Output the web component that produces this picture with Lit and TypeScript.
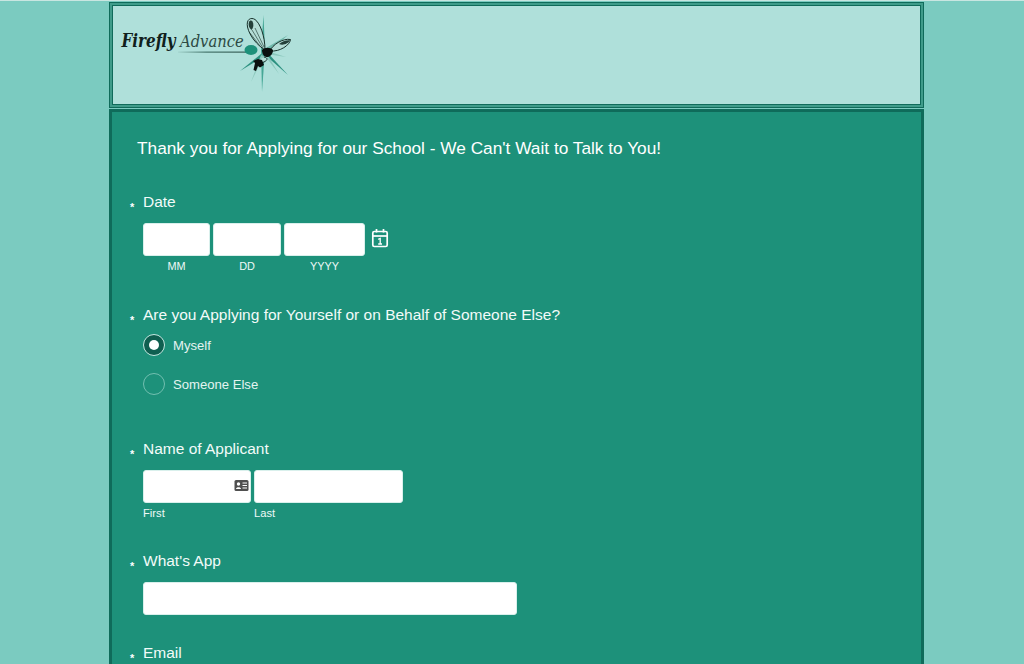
import { LitElement, html, css } from "lit";
import { customElement } from "lit/decorators.js";

@customElement("app-root")
export class AppRoot extends LitElement {
  static styles = css`
    :host {
      display: block;
      height: 664px;
      overflow: hidden;
      background: #7bcbc0;
      font-family: "Liberation Sans", Arial, sans-serif;
      color: #fff;
    }
    * { box-sizing: border-box; }
    .topline { height: 1px; background: #c9e6e1; }
    .wrap { width: 815px; margin-left: 109px; padding-top: 1px; }
    .frame { border: 1px solid #0f6b5a; background: #3f9c8a; padding: 2px; }
    .header {
      height: 100px;
      background: #afe0da;
      border: 1px solid #0f6b5a;
      padding: 6px 0 0 5px;
    }
    .logo { display: block; width: 180px; height: 85px; }
    .form-frame {
      margin-top: 1px;
      border: 1px solid #0f6b5a;
      border-top-width: 3px;
      border-left-width: 3px;
      border-right-width: 3px;
      height: 700px;
      background: #1d917a;
      padding: 25px 0 0 16px;
    }
    .title {
      margin: 0 0 33px 9px;
      font-size: 17.27px;
      font-weight: 400;
      line-height: 22px;
    }
    .field { display: grid; grid-template-columns: 15px 1fr; }
    .star { font-size: 11px; font-weight: 700; line-height: 20px; padding: 5px 0 0 2px; }
    .label { font-size: 15.5px; line-height: 20px; margin-bottom: 11px; color: #f2fbf9; }
    .f-date { height: 113px; }
    .f-choice { height: 134px; }
    .f-name { height: 112px; }
    .f-app { height: 92px; }
    .inputs { display: flex; gap: 3px; align-items: flex-start; }
    .part { display: flex; flex-direction: column; }
    .box {
      height: 33px;
      background: #fff;
      border: 1px solid #d9f0ec;
      border-radius: 3px;
      position: relative;
    }
    .sub { font-size: 11.2px; line-height: 12px; margin-top: 4px; color: #eef9f7; }
    .sub.c { font-size: 10.9px; text-align: center; }
    .mm { width: 67px; }
    .dd { width: 68px; }
    .yy { width: 81px; }
    .cal { width: 18px; height: 20px; margin: 5px 0 0 3px; }
    .first { width: 108px; }
    .last { width: 149px; }
    .id {
      position: absolute;
      right: 1px;
      top: 8px;
      width: 15px;
      height: 13px;
    }
    .wide { width: 374px; }
    .label.tight { margin-bottom: 9px; }
    .radios { display: flex; flex-direction: column; gap: 17px; }
    .radio { display: flex; align-items: center; gap: 8px; font-size: 13.1px; color: #e4f4f1; }
    .dot {
      width: 22px;
      height: 22px;
      border-radius: 50%;
      border: 1px solid #72bfb0;
      display: flex;
      align-items: center;
      justify-content: center;
    }
    .dot.on { background: #0f5f50; border: 1px solid #c5e8e1; }
    .dot.on::after {
      content: "";
      width: 10px;
      height: 10px;
      border-radius: 50%;
      background: #fff;
    }
    .brand-a { font-family: "DejaVu Serif", serif; font-style: italic; font-weight: 700; font-size: 19px; fill: #10201c; }
    .brand-b { font-family: "DejaVu Serif", serif; font-style: italic; font-size: 17.5px; fill: #2c4a43; }
  `;

  private logo() {
    return html`<svg class="logo" viewBox="118 12 180 85">
      <defs>
        <linearGradient id="rule" x1="0" x2="1" y1="0" y2="0">
          <stop offset="0" stop-color="#2f5f55" stop-opacity="0.1"/>
          <stop offset="0.4" stop-color="#2f5f55"/>
          <stop offset="1" stop-color="#1d3f38"/>
        </linearGradient>
      </defs>
      <text class="brand-a" transform="translate(121.500 47) scale(.75 1)" textLength="72" lengthAdjust="spacingAndGlyphs">Firefly</text>
      <text class="brand-b" transform="translate(180 47) scale(.75 1)" textLength="85" lengthAdjust="spacingAndGlyphs">Advance</text>
      <rect x="178" y="51.600" width="72" height="1" fill="url(#rule)"/>
      <path d="M263.500 15L265 50L262 92L261 50Z" fill="#46a796"/>
      <path d="M240 71L261 54L263 57Z" fill="#2d9180"/>
      <path d="M264 54L266 51L288 75Z" fill="#2d9180"/>
      <path d="M266 48L269 52L288 35Z" fill="#6fb8aa"/>
      <path d="M262 52L266 52L279 74ZM264 50L266 54L286 57ZM261 55L264 56L251 82Z" fill="#8cc8bd"/>
      <ellipse cx="251" cy="50" rx="6.500" ry="5" fill="#1d917a"/>
      <path d="M247.500 27C246 19 251 17 255 19.500C260 23 265 36 265 50C257 45 249.500 36 247.500 27Z" fill="#b4ddd6" stroke="#16302a" stroke-width="1"/>
      <path d="M249 22C248 25 249 28 251.500 30C253.500 28 254 24 252.500 21.500C251.500 20 249.500 20.500 249 22Z" fill="#24403a"/>
      <path d="M252 30L263 48M255 28L264 47M250 33L260 46" stroke="#16302a" stroke-width=".6" fill="none"/>
      <path d="M270 51C272 45 283 38 290.500 39.500C290 45 280 52 270 51Z" fill="#b4ddd6" stroke="#16302a" stroke-width="1"/>
      <path d="M279 44C282 41.500 286 40 290 40.300C288.500 43.500 283 46 279 44Z" fill="#24403a"/>
      <path d="M262 50C265 47 270 47 273 50C273 54 270 57.500 266 57C263 56 262 53 262 50Z" fill="#0a0f0e"/>
      <path d="M264 57C268 58 268 60 264 62C262 63 260 62 259 60" fill="#b4ddd6" stroke="#16302a" stroke-width="1"/>
      <path d="M258 59L262 60L264 65L260 67.500L258 66L256 71L253.500 70L255 63L253 61Z" fill="#0a0f0e"/>
    </svg>`;
  }

  private calendar() {
    return html`<svg class="cal" viewBox="0 0 18 20" fill="none" stroke="#fff">
      <rect x="1.800" y="3.500" width="14.400" height="15" rx="1.500" stroke-width="1.700"/>
      <path d="M2 8H16" stroke-width="1.700"/>
      <path d="M5.500 1V4.500M12.500 1V4.500" stroke-width="1.700"/>
      <path d="M7.200 11.300L9.200 10.400V16M7.200 16H11" stroke-width="1.300"/>
    </svg>`;
  }

  private idCard() {
    return html`<svg class="id" viewBox="0 0 15 13">
      <rect x="0.500" y="1" width="14" height="11" rx="1.500" fill="#4f4f4f"/>
      <circle cx="4.500" cy="5" r="1.700" fill="#fff"/>
      <path d="M2 10C2 7.700 7 7.700 7 10Z" fill="#fff"/>
      <path d="M8.500 4H13M8.500 6.500H13M8.500 9H13" stroke="#fff" stroke-width="1"/>
    </svg>`;
  }

  render() {
    return html`
      <div class="topline"></div>
      <div class="wrap">
        <div class="frame"><div class="header">${this.logo()}</div></div>
        <div class="form-frame">
          <h1 class="title">Thank you for Applying for our School - We Can't Wait to Talk to You!</h1>

          <div class="field f-date">
            <span class="star">*</span>
            <div>
              <div class="label">Date</div>
              <div class="inputs">
                <div class="part"><div class="box mm"></div><span class="sub c">MM</span></div>
                <div class="part"><div class="box dd"></div><span class="sub c">DD</span></div>
                <div class="part"><div class="box yy"></div><span class="sub c">YYYY</span></div>
                ${this.calendar()}
              </div>
            </div>
          </div>

          <div class="field f-choice">
            <span class="star">*</span>
            <div>
              <div class="label tight">Are you Applying for Yourself or on Behalf of Someone Else?</div>
              <div class="radios">
                <div class="radio"><span class="dot on"></span>Myself</div>
                <div class="radio"><span class="dot"></span>Someone Else</div>
              </div>
            </div>
          </div>

          <div class="field f-name">
            <span class="star">*</span>
            <div>
              <div class="label">Name of Applicant</div>
              <div class="inputs">
                <div class="part"><div class="box first">${this.idCard()}</div><span class="sub">First</span></div>
                <div class="part"><div class="box last"></div><span class="sub">Last</span></div>
              </div>
            </div>
          </div>

          <div class="field f-app">
            <span class="star">*</span>
            <div>
              <div class="label">What's App</div>
              <div class="box wide"></div>
            </div>
          </div>

          <div class="field">
            <span class="star">*</span>
            <div>
              <div class="label">Email</div>
              <div class="box wide"></div>
            </div>
          </div>
        </div>
      </div>
    `;
  }
}
